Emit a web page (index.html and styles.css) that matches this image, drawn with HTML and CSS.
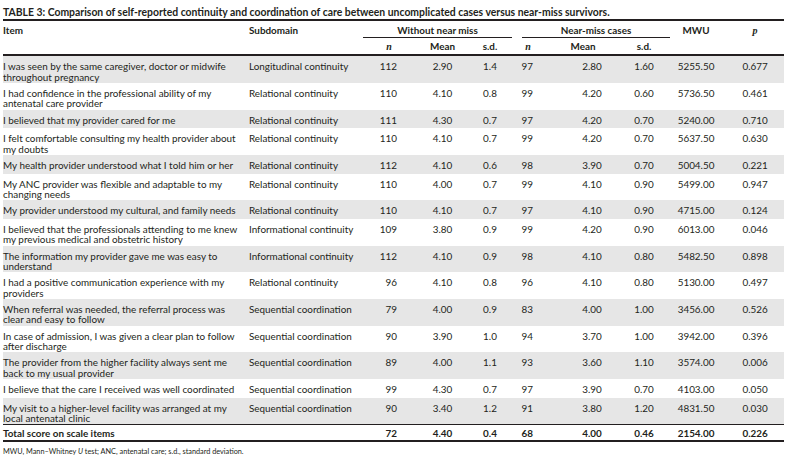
FILE: index.html
```html
<!DOCTYPE html>
<html lang="en">
<head>
<meta charset="utf-8">
<title>Table 3</title>
<link rel="stylesheet" href="styles.css">
</head>
<body>
<div class="page">
  <div class="title">TABLE 3: Comparison of self-reported continuity and coordination of care between uncomplicated cases versus near-miss survivors.</div>
  <table class="tbl">
    <colgroup>
      <col class="c-item"><col class="c-sub"><col class="c-n1"><col class="c-m1"><col class="c-s1"><col class="c-n2"><col class="c-m2"><col class="c-s2"><col class="c-mwu"><col class="c-p">
    </colgroup>
    <thead>
      <tr class="h1">
        <th rowspan="2" class="rs item">Item</th>
        <th rowspan="2" class="rs sub">Subdomain</th>
        <th colspan="3"><div class="grp g1">Without near miss</div></th>
        <th colspan="3"><div class="grp g2">Near-miss cases</div></th>
        <th rowspan="2" class="rs mwu">MWU</th>
        <th rowspan="2" class="rs p"><i class="ser">p</i></th>
      </tr>
      <tr class="h2">
        <th class="n1h"><i class="ser">n</i></th>
        <th>Mean</th>
        <th>s.d.</th>
        <th><i class="ser">n</i></th>
        <th class="m2">Mean</th>
        <th>s.d.</th>
      </tr>
    </thead>
    <tbody>
      <tr class="alt"><td class="item">I was seen by the same caregiver, doctor or midwife<br>throughout pregnancy</td><td class="sub">Longitudinal continuity</td><td class="n1">112</td><td>2.90</td><td>1.4</td><td class="n2">97</td><td class="m2">2.80</td><td>1.60</td><td>5255.50</td><td class="p">0.677</td></tr>
      <tr><td class="item">I had confidence in the professional ability of my<br>antenatal care provider</td><td class="sub">Relational continuity</td><td class="n1">110</td><td>4.10</td><td>0.8</td><td class="n2">99</td><td class="m2">4.20</td><td>0.60</td><td>5736.50</td><td class="p">0.461</td></tr>
      <tr class="alt one"><td class="item">I believed that my provider cared for me</td><td class="sub">Relational continuity</td><td class="n1">111</td><td>4.30</td><td>0.7</td><td class="n2">97</td><td class="m2">4.20</td><td>0.70</td><td>5240.00</td><td class="p">0.710</td></tr>
      <tr><td class="item">I felt comfortable consulting my health provider about<br>my doubts</td><td class="sub">Relational continuity</td><td class="n1">110</td><td>4.10</td><td>0.7</td><td class="n2">99</td><td class="m2">4.20</td><td>0.70</td><td>5637.50</td><td class="p">0.630</td></tr>
      <tr class="alt one"><td class="item">My health provider understood what I told him or her</td><td class="sub">Relational continuity</td><td class="n1">112</td><td>4.10</td><td>0.6</td><td class="n2">98</td><td class="m2">3.90</td><td>0.70</td><td>5004.50</td><td class="p">0.221</td></tr>
      <tr><td class="item">My ANC provider was flexible and adaptable to my<br>changing needs</td><td class="sub">Relational continuity</td><td class="n1">110</td><td>4.00</td><td>0.7</td><td class="n2">99</td><td class="m2">4.10</td><td>0.90</td><td>5499.00</td><td class="p">0.947</td></tr>
      <tr class="alt one"><td class="item">My provider understood my cultural, and family needs</td><td class="sub">Relational continuity</td><td class="n1">110</td><td>4.10</td><td>0.7</td><td class="n2">97</td><td class="m2">4.10</td><td>0.90</td><td>4715.00</td><td class="p">0.124</td></tr>
      <tr><td class="item">I believed that the professionals attending to me knew<br>my previous medical and obstetric history</td><td class="sub">Informational continuity</td><td class="n1">109</td><td>3.80</td><td>0.9</td><td class="n2">99</td><td class="m2">4.20</td><td>0.90</td><td>6013.00</td><td class="p">0.046</td></tr>
      <tr class="alt"><td class="item">The information my provider gave me was easy to<br>understand</td><td class="sub">Informational continuity</td><td class="n1">112</td><td>4.10</td><td>0.9</td><td class="n2">98</td><td class="m2">4.10</td><td>0.80</td><td>5482.50</td><td class="p">0.898</td></tr>
      <tr><td class="item">I had a positive communication experience with my<br>providers</td><td class="sub">Relational continuity</td><td class="n1">96</td><td>4.10</td><td>0.8</td><td class="n2">96</td><td class="m2">4.10</td><td>0.80</td><td>5130.00</td><td class="p">0.497</td></tr>
      <tr class="alt"><td class="item">When referral was needed, the referral process was<br>clear and easy to follow</td><td class="sub">Sequential coordination</td><td class="n1">79</td><td>4.00</td><td>0.9</td><td class="n2">83</td><td class="m2">4.00</td><td>1.00</td><td>3456.00</td><td class="p">0.526</td></tr>
      <tr><td class="item">In case of admission, I was given a clear plan to follow<br>after discharge</td><td class="sub">Sequential coordination</td><td class="n1">90</td><td>3.90</td><td>1.0</td><td class="n2">94</td><td class="m2">3.70</td><td>1.00</td><td>3942.00</td><td class="p">0.396</td></tr>
      <tr class="alt"><td class="item">The provider from the higher facility always sent me<br>back to my usual provider</td><td class="sub">Sequential coordination</td><td class="n1">89</td><td>4.00</td><td>1.1</td><td class="n2">93</td><td class="m2">3.60</td><td>1.10</td><td>3574.00</td><td class="p">0.006</td></tr>
      <tr class="one"><td class="item">I believe that the care I received was well coordinated</td><td class="sub">Sequential coordination</td><td class="n1">99</td><td>4.30</td><td>0.7</td><td class="n2">97</td><td class="m2">3.90</td><td>0.70</td><td>4103.00</td><td class="p">0.050</td></tr>
      <tr class="alt"><td class="item">My visit to a higher-level facility was arranged at my<br>local antenatal clinic</td><td class="sub">Sequential coordination</td><td class="n1">90</td><td>3.40</td><td>1.2</td><td class="n2">91</td><td class="m2">3.80</td><td>1.20</td><td>4831.50</td><td class="p">0.030</td></tr>
    </tbody>
    <tfoot>
      <tr class="total"><td class="item">Total score on scale items</td><td class="sub"></td><td class="n1">72</td><td>4.40</td><td>0.4</td><td class="n2">68</td><td class="m2">4.00</td><td>0.46</td><td>2154.00</td><td class="p">0.226</td></tr>
    </tfoot>
  </table>
  <div class="note">MWU, Mann–Whitney <i>U</i> test; ANC, antenatal care; s.d., standard deviation.</div>
</div>
</body>
</html>
```
FILE: styles.css
```css
html, body { margin: 0; padding: 0; background: #ffffff; }
body {
  font-family: Lato, "Open Sans", sans-serif;
  color: #231f20;
  width: 794px;
  height: 464px;
  overflow: hidden;
}
.page { padding: 0 10px 0 3px; }

.title {
  font-size: 10.4px;
  font-weight: 700;
  line-height: 11px;
  padding-top: 7px;
  margin-bottom: 1px;
  white-space: nowrap;
}

.tbl {
  width: 781px;
  table-layout: fixed;
  border-collapse: separate;
  border-spacing: 0;
  border-top: 2px solid #231f20;
  border-bottom: 2px solid #231f20;
  font-size: 9.9px;
}
.c-item { width: 243px; }
.c-sub { width: 117px; }
.c-n1 { width: 52px; }
.c-m1 { width: 55px; }
.c-s1 { width: 40px; }
.c-n2 { width: 36px; }
.c-m2 { width: 74px; }
.c-s2 { width: 48px; }
.c-mwu { width: 56px; }
.c-p { width: 60px; }

th, td { padding: 0; }

thead th {
  font-weight: 700;
  line-height: 10.33px;
  text-align: center;
  vertical-align: top;
  white-space: nowrap;
}
.h1 th { padding-top: 4px; }
.h2 th { padding: 3px 0 2px; border-bottom: 2px solid #231f20; }
th.rs { border-bottom: 2px solid #231f20; }
th.item { text-align: left; }
th.sub { text-align: left; padding-left: 3px; }
th.p { padding-left: 2px; }

.grp {
  padding-bottom: 1.67px;
  border-bottom: 1px solid #231f20;
}
.g1 { margin-right: -2px; }
.g2 { margin-left: 12px; margin-right: -2px; }

.ser {
  font-family: "Liberation Serif", serif;
  font-style: italic;
  font-weight: 700;
  font-size: 10px;
}

tbody td {
  padding: 5px 0 1px;
  line-height: 10.33px;
  vertical-align: top;
  text-align: center;
  white-space: nowrap;
  font-size: 9.9px;
}
tbody tr.one td { height: 12.67px; }
tbody tr.alt td { background: #e6e6e6; }

td.item { text-align: left; }
td.sub { text-align: left; padding-left: 3px; }
td.n1 { text-align: right; padding-right: 18px; }
td.n2 { text-align: right; padding-right: 13px; }
.m2 { padding-left: 18px; }
td.p { padding-left: 2px; }

.total td {
  border-top: 1px solid #231f20;
  padding: 3px 0 1.5px;
  line-height: 10.33px;
  font-weight: 700;
  text-align: center;
  vertical-align: top;
  white-space: nowrap;
}
.total td.item { text-align: left; }
.total td.n1 { text-align: right; padding-right: 18px; }
.total td.n2 { text-align: right; padding-right: 13px; }
.total td.m2 { padding-left: 18px; }
.total td.p { padding-left: 2px; }

.note {
  font-size: 7.3px;
  line-height: 10px;
  padding-top: 5px;
  white-space: nowrap;
}
```
